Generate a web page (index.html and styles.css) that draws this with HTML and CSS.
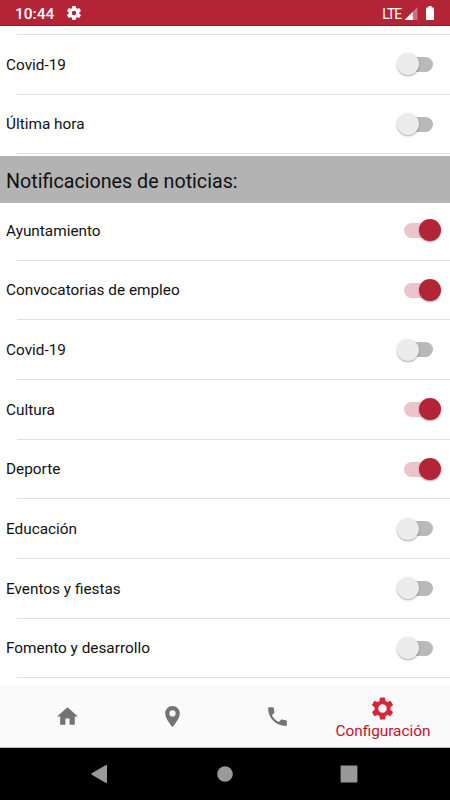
FILE: index.html
```html
<!DOCTYPE html>
<html lang="es">
<head>
  <meta charset="UTF-8">
  <title>Configuración</title>
  <link rel="stylesheet" href="styles.css">
</head>
<body>

  <!-- Barra de estado -->
  <div class="status">
    <span class="clock">10:44</span>
    <svg class="gear-small" viewBox="2 2 20 20"><path fill-rule="evenodd" d="M9.600 2h4.800l.5 3.100 1.800 1 2.900-1.100 2.400 4.100-2.400 1.900v2l2.400 1.900-2.400 4.100-2.900-1.100-1.800 1-.5 3.100H9.600l-.5-3.100-1.800-1L4.400 19 2 14.900 4.400 13v-2L2 9.100 4.400 5l2.900 1.100 1.800-1zM12 8.800a3.200 3.200 0 1 0 0 6.400 3.200 3.200 0 0 0 0-6.400z"/></svg>
    <span class="lte">LTE</span>
    <svg class="signal" viewBox="0 0 14 14"><path d="M14 0v14H0z" opacity=".35"/><path d="M9 5v9H0z"/></svg>
    <svg class="battery" viewBox="0 0 8 14"><path d="M2.4 0h3.2v1.4H7.2c.5 0 .8.3.8.8v11c0 .5-.3.8-.8.8H.8c-.5 0-.8-.3-.8-.8v-11c0-.5.3-.8.8-.8h1.6z"/></svg>
  </div>

  <!-- Lista de notificaciones -->
  <div class="list">
    <div class="divider"></div>
    <div class="row"><span>Covid-19</span><i class="switch"></i></div>
    <div class="row"><span>Última hora</span><i class="switch"></i></div>
    <h2>Notificaciones de noticias:</h2>
    <div class="row"><span>Ayuntamiento</span><i class="switch on"></i></div>
    <div class="row"><span>Convocatorias de empleo</span><i class="switch on"></i></div>
    <div class="row"><span>Covid-19</span><i class="switch"></i></div>
    <div class="row"><span>Cultura</span><i class="switch on"></i></div>
    <div class="row"><span>Deporte</span><i class="switch on"></i></div>
    <div class="row"><span>Educación</span><i class="switch"></i></div>
    <div class="row"><span>Eventos y fiestas</span><i class="switch"></i></div>
    <div class="row"><span>Fomento y desarrollo</span><i class="switch"></i></div>
  </div>

  <!-- Pestañas -->
  <div class="tabs">
    <div class="tab"><svg viewBox="0 0 24 24"><path d="M10 20v-6h4v6h5v-8h3L12 3 2 12h3v8z"/></svg></div>
    <div class="tab"><svg viewBox="0 0 24 24"><path d="M12 2C8.13 2 5 5.13 5 9c0 5.25 7 13 7 13s7-7.75 7-13c0-3.87-3.13-7-7-7zm0 10a3 3 0 0 1 0-6 3 3 0 0 1 0 6z"/></svg></div>
    <div class="tab"><svg viewBox="0 0 24 24"><path d="M6.62 10.79c1.44 2.83 3.76 5.14 6.59 6.59l2.2-2.2c.27-.27.67-.36 1.02-.24 1.12.37 2.33.57 3.57.57.55 0 1 .45 1 1V20c0 .55-.45 1-1 1-9.39 0-17-7.61-17-17 0-.55.45-1 1-1h3.5c.55 0 1 .45 1 1 0 1.25.2 2.45.57 3.57.11.35.03.74-.25 1.02z"/></svg></div>
    <div class="tab active">
      <svg viewBox="0 0 24 24"><path fill-rule="evenodd" d="M10.100 1.500h3.800q.5 0 .6.500l.4 2.700 1.800 1 2.600-1q.4-.2.700.3l1.900 3.200q.3.500-.1.800L19.600 10.700v2.600l2.200 1.700q.4.300.1.800L20 19q-.3.500-.7.300l-2.600-1-1.800 1-.4 2.700q-.1.500-.6.500h-3.800q-.5 0-.6-.5l-.4-2.700-1.800-1-2.600 1q-.4.200-.7-.3l-1.900-3.200q-.3-.5.1-.8l2.200-1.700v-2.600L2.200 9q-.4-.3-.1-.8L4 5q.3-.5.700-.3l2.600 1 1.800-1 .4-2.700q.1-.5.600-.5zM12 7.900a4.100 4.100 0 1 0 0 8.200 4.100 4.100 0 0 0 0-8.200z"/></svg>
      <span>Configuración</span>
    </div>
  </div>

  <!-- Botones del sistema -->
  <div class="navbar">
    <svg viewBox="0 0 18 18"><path d="M16 .8v16.4c0 .7-.6 1-1.100.7L.8 9.700c-.7-.4-.7-1 0-1.400L14.900.1c.5-.3 1.100 0 1.100.7z"/></svg>
    <svg viewBox="0 0 18 18"><circle cx="9" cy="9" r="7.800"/></svg>
    <svg viewBox="0 0 18 18"><rect x=".6" y=".6" width="16.800" height="16.800" rx="1"/></svg>
  </div>

</body>
</html>
```

FILE: styles.css
```css
body {
  margin: 0;
  height: 800px;
  display: flex;
  flex-direction: column;
  overflow: hidden;
  font-family: Roboto, sans-serif;
  background-color: #fff;
  color: #111;
}

svg {
  display: block;
  fill: currentColor;
}

/* Barra de estado */
.status {
  box-sizing: border-box;
  height: 26px;
  flex: none;
  display: flex;
  align-items: center;
  padding: 2px 16px 0 15px;
  background-color: #b22436;
  border-bottom: 1px solid #b0101c;
  color: #fff;
}

.clock {
  font-size: 15.5px;
  font-weight: 500;
  width: 52px;
}

.gear-small {
  width: 14px;
  height: 14px;
  margin-top: -1px;
}

.lte {
  margin-left: auto;
  font-size: 14px;
  letter-spacing: -1.1px;
}

.signal {
  width: 14px;
  height: 13px;
  margin: 0 8px 0 3px;
}

.battery {
  width: 8px;
  height: 14px;
  margin-top: -1px;
}

/* Lista */
.list {
  height: 659px;
  flex: none;
  overflow: hidden;
}

.divider {
  margin: 8px 0 2px 17px;
  height: 1px;
  background-color: #e0e0e0;
}

.row {
  height: 59.7px;
  box-sizing: border-box;
  padding: 0 9px 4.8px 6px;
  display: flex;
  align-items: center;
  justify-content: space-between;
  font-size: 15.35px;
  background: linear-gradient(#e0e0e0, #e0e0e0) 17px 56.7px / 100% 1px no-repeat;
}

.row span {
  padding-top: 0.6px;
}

h2 {
  margin: 0;
  height: 46.5px;
  line-height: 52px;
  padding-left: 6px;
  font-size: 19.7px;
  font-weight: 400;
  background-color: #b3b3b3;
}

/* Interruptor */
.switch {
  position: relative;
  width: 29px;
  height: 15px;
  margin-right: 8px;
  border-radius: 8px;
  background-color: #b9b9b9;
}

.switch::after {
  content: "";
  position: absolute;
  top: -3.5px;
  left: -7.5px;
  width: 22px;
  height: 22px;
  border-radius: 50%;
  background-color: #ececec;
  box-shadow: 0 1px 2px rgba(0,0,0,0.35);
}

.switch.on {
  background-color: #ebc5cb;
}

.switch.on::after {
  left: 14.5px;
  background-color: #b22436;
}

/* Pestañas */
.tabs {
  height: 63px;
  flex: none;
  box-sizing: border-box;
  display: grid;
  grid-template-columns: repeat(4, 105.3px);
  justify-content: center;
  background-color: #fafafa;
  border-bottom: 1px solid #bbb;
  color: #737373;
}

.tab {
  display: flex;
  flex-direction: column;
  align-items: center;
  justify-content: center;
}

.tab svg {
  width: 25px;
  height: 25px;
}

.tab.active {
  padding-top: 5px;
  color: #c8102e;
  font-size: 15.35px;
}

.tab.active svg {
  color: #d6263a;
}

.tab.active span {
  line-height: 21px;
}

/* Botones del sistema */
.navbar {
  height: 52px;
  flex: none;
  display: flex;
  justify-content: center;
  align-items: center;
  gap: 106.5px;
  background-color: #000;
  color: #999;
}

.navbar svg {
  width: 18px;
  height: 18px;
}

.navbar svg:first-child {
  margin-left: -1px;
}
```
